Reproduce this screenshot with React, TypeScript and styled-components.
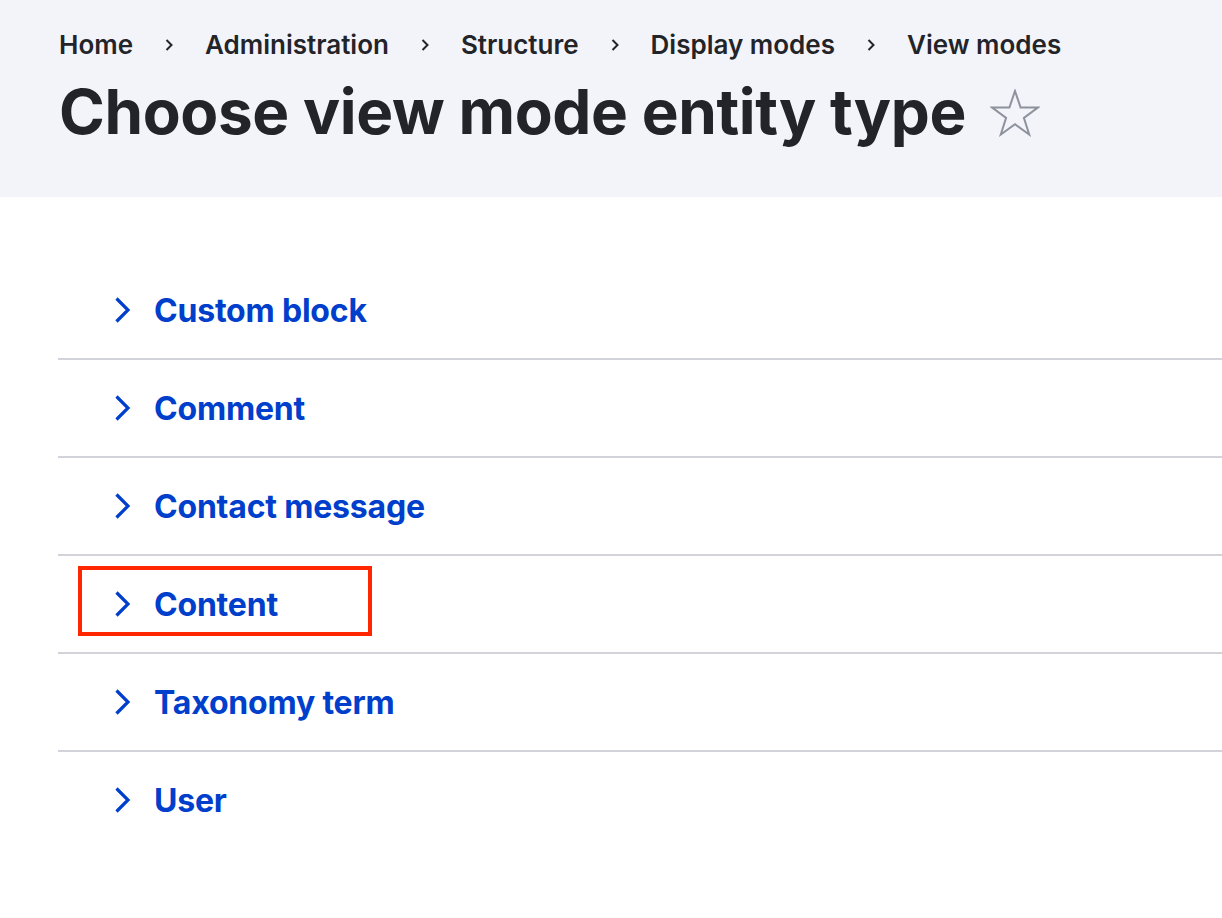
import React from 'react';
import styled, { createGlobalStyle } from 'styled-components';

const GlobalStyle = createGlobalStyle`
  html, body {
    margin: 0;
    padding: 0;
    background: #fff;
    font-family: Inter, "Noto Sans", "Liberation Sans", sans-serif;
    color: #232429;
  }
`;

const crumbs = ['Home', 'Administration', 'Structure', 'Display modes', 'View modes'];

const entityTypes = [
  { label: 'Custom block' },
  { label: 'Comment' },
  { label: 'Contact message' },
  { label: 'Content', highlighted: true },
  { label: 'Taxonomy term' },
  { label: 'User' },
];

const Header = styled.header`
  background: #f3f4f9;
  height: 197px;
  box-sizing: border-box;
  padding: 28px 0 0 59px;
`;

const Breadcrumb = styled.nav`
  display: flex;
  align-items: center;
  gap: 31px;
  font-size: 26px;
  font-weight: 600;
  line-height: 34px;
  color: #232429;
`;

const Separator = styled.svg`
  width: 10px;
  height: 14px;
  flex: none;
`;

const TitleRow = styled.div`
  display: flex;
  align-items: center;
  gap: 24px;
  margin-top: 10px;
`;

const Title = styled.h1`
  margin: 0;
  font-size: 62px;
  font-weight: 700;
  letter-spacing: -0.4px;
  line-height: 80px;
  color: #232429;
`;

const Star = styled.svg`
  width: 50px;
  height: 48px;
  margin-top: 2px;
`;

const List = styled.ul`
  list-style: none;
  margin: 0 0 0 58px;
  padding: 65px 0 0;
`;

const Row = styled.li`
  position: relative;
  display: flex;
  align-items: center;
  height: 96px;
  padding-left: 56px;
  border-bottom: 2px solid #d3d4d9;

  &:last-child {
    border-bottom: none;
  }
`;

const Chevron = styled.svg`
  width: 18px;
  height: 28px;
  margin-right: 22px;
  flex: none;
`;

const ItemLink = styled.a`
  font-size: 32px;
  font-weight: 700;
  color: #003ecc;
  text-decoration: none;
  letter-spacing: -0.2px;
`;

const Highlight = styled.span`
  position: absolute;
  left: 20px;
  top: 10px;
  width: 294px;
  height: 70px;
  box-sizing: border-box;
  border: 4px solid #ff2600;
  pointer-events: none;
`;

const App: React.FC = () => (
  <>
    <GlobalStyle />
    <Header>
      <Breadcrumb>
        {crumbs.map((c, i) => (
          <React.Fragment key={c}>
            {i > 0 && (
              <Separator viewBox="0 0 10 14">
                <path d="M2.5 2l5 5-5 5" fill="none" stroke="#232429" strokeWidth="2" />
              </Separator>
            )}
            <span>{c}</span>
          </React.Fragment>
        ))}
      </Breadcrumb>
      <TitleRow>
        <Title>Choose view mode entity type</Title>
        <Star viewBox="0 0 50 48">
          <path
            d="M25 2l5.6 16.6h17.2L33.9 28.9l5.3 16.6L25 35.3 10.8 45.5l5.3-16.6L2.2 18.6h17.2z"
            fill="none"
            stroke="#8e929c"
            strokeWidth="2"
            strokeLinejoin="miter"
          />
        </Star>
      </TitleRow>
    </Header>
    <List>
      {entityTypes.map((e) => (
        <Row key={e.label}>
          <Chevron viewBox="0 0 18 28">
            <path d="M2.5 2.5L14 14 2.5 25.5" fill="none" stroke="#003ecc" strokeWidth="3.2" />
          </Chevron>
          <ItemLink href="#">{e.label}</ItemLink>
          {e.highlighted && <Highlight />}
        </Row>
      ))}
    </List>
  </>
);

export default App;
